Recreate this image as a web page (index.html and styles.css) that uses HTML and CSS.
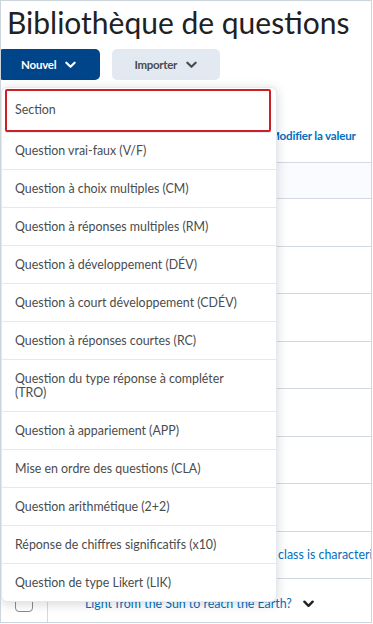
FILE: index.html
```html
<!DOCTYPE html>
<html lang="fr">
<head>
    <meta charset="UTF-8">
    <title>Bibliothèque de questions</title>
    <link rel="stylesheet" href="styles.css">
</head>
<body>

<div class="frame">
    <h1 class="page-title">Bibliothèque de questions</h1>

    <div class="toolbar">
        <button class="btn btn-primary">Nouvel
            <svg class="chevron" viewBox="0 0 12 8"><path d="M1.5 1.5 L6 6 L10.5 1.5"/></svg>
        </button>
        <button class="btn btn-secondary">Importer
            <svg class="chevron" viewBox="0 0 12 8"><path d="M1.5 1.5 L6 6 L10.5 1.5"/></svg>
        </button>
    </div>

    <div class="actions">
        <a href="#">Modifier la valeur</a>
    </div>

    <!-- liste des questions (derrière le menu) -->
    <div class="qtable">
        <div class="qrow qhead"><div class="qcell check"></div><div class="qcell"></div></div>
        <div class="qrow tall"><div class="qcell check"></div><div class="qcell"></div></div>
        <div class="qrow"><div class="qcell check"></div><div class="qcell"></div></div>
        <div class="qrow tall"><div class="qcell check"></div><div class="qcell"></div></div>
        <div class="qrow"><div class="qcell check"></div><div class="qcell"></div></div>
        <div class="qrow tall"><div class="qcell check"></div><div class="qcell"></div></div>
        <div class="qrow"><div class="qcell check"></div><div class="qcell"></div></div>
        <div class="qrow tall"><div class="qcell check"></div><div class="qcell"></div></div>
        <div class="qrow">
            <div class="qcell check"><span class="checkbox"></span></div>
            <div class="qcell text middle"><a href="#">Which main-sequence spectral class is characterized by</a></div>
        </div>
        <div class="qrow last">
            <div class="qcell check"><span class="checkbox"></span></div>
            <div class="qcell text">
                <a href="#">How long does it take for<br>Light from the Sun to reach the Earth?</a><svg class="chevron dark" viewBox="0 0 12 8"><path d="M1.5 1.5 L6 6 L10.5 1.5"/></svg>
            </div>
        </div>
    </div>

    <ul class="menu">
        <li class="menu-item focused">Section</li>
        <li class="menu-item">Question vrai-faux (V/F)</li>
        <li class="menu-item">Question à choix multiples (CM)</li>
        <li class="menu-item">Question à réponses multiples (RM)</li>
        <li class="menu-item">Question à développement (DÉV)</li>
        <li class="menu-item">Question à court développement (CDÉV)</li>
        <li class="menu-item">Question à réponses courtes (RC)</li>
        <li class="menu-item">Question du type réponse à compléter (TRO)</li>
        <li class="menu-item">Question à appariement (APP)</li>
        <li class="menu-item">Mise en ordre des questions (CLA)</li>
        <li class="menu-item">Question arithmétique (2+2)</li>
        <li class="menu-item">Réponse de chiffres significatifs (x10)</li>
        <li class="menu-item">Question de type Likert (LIK)</li>
    </ul>
</div>

</body>
</html>
```

FILE: styles.css
```css
* {
    margin: 0;
    padding: 0;
    box-sizing: border-box;
    list-style: none;
}

body {
    background-color: #ffffff;
    font-family: Lato, "Noto Sans", sans-serif;
    color: #494c4e;
}

.frame {
    position: relative;
    width: 372px;
    height: 623px;
    border: 1px solid #cdd5dc;
    overflow: hidden;
}

.page-title {
    margin: 3px 0 0 6px;
    font-size: 30px;
    line-height: 36px;
    font-weight: 400;
    color: #202122;
    white-space: nowrap;
}

.toolbar {
    display: flex;
    gap: 12px;
    margin: 9px 0 0 -3px;
}

.btn {
    display: flex;
    align-items: center;
    gap: 9px;
    height: 31px;
    padding: 0 24px 0 23px;
    border: none;
    border-radius: 5px;
    font-family: Lato, sans-serif;
    font-size: 11.5px;
    letter-spacing: -0.2px;
    font-weight: 700;
}

.btn-primary {
    background-color: #004489;
    color: #ffffff;
}

.btn-secondary {
    padding: 0 23px 0 22px;
    background-color: #e3e9f1;
    color: #494c4e;
    letter-spacing: -0.3px;
}

.chevron {
    width: 11px;
    height: 8px;
    fill: none;
    stroke: #494c4e;
    stroke-width: 2.4;
    stroke-linecap: round;
    stroke-linejoin: round;
}

.btn-primary .chevron {
    stroke: #ffffff;
}

.actions {
    height: 82px;
    padding: 49px 0 0 268px;
    font-size: 11.6px;
    letter-spacing: -0.2px;
    font-weight: 700;
    white-space: nowrap;
}

.actions a {
    color: #006fbf;
    text-decoration: none;
}

/* tableau */
.qtable {
    border-top: 1px solid #d3d9e3;
}

.qrow {
    display: grid;
    grid-template-columns: 47px 1fr;
    height: 47px;
    border-bottom: 1px solid #d3d9e3;
}

.qrow.tall {
    height: 48px;
}

.qrow.qhead {
    height: 36px;
    background-color: #f9fbff;
}

.qrow.last {
    height: 60px;
    border-bottom: none;
}

.qcell.check {
    border-right: 1px solid #d3d9e3;
    display: flex;
    justify-content: center;
    padding-top: 14px;
}

.qrow.last .qcell.check {
    padding-top: 15px;
}

.checkbox {
    width: 18px;
    height: 18px;
    border: 1px solid #868c8f;
    border-radius: 4px;
}

.qcell.text {
    padding: 1px 0 0 37px;
    font-size: 12.4px;
    line-height: 16px;
    white-space: nowrap;
    overflow: hidden;
}

.qcell.text.middle {
    display: flex;
    align-items: center;
    padding: 0 0 0 60px;
}

.qcell.text a {
    color: #006fbf;
    text-decoration: none;
}

.chevron.dark {
    margin-left: 11px;
    stroke: #202122;
    stroke-width: 2.6;
}

/* menu déroulant */
.menu {
    position: absolute;
    top: 86px;
    left: 0;
    width: 276px;
    padding-top: 1px;
    background-color: #ffffff;
    border: 1px solid #e3e9f1;
    border-radius: 6px;
    box-shadow: 0 2px 12px rgba(0, 0, 0, 0.16);
}

.menu-item {
    padding: 11.5px 20px 11.5px 13px;
    font-size: 12.4px;
    line-height: 14px;
    color: #494c4e;
    border-bottom: 1px solid #e3e9f1;
}

.menu-item:last-child {
    border-bottom: none;
}

.menu-item.focused {
    margin: 0 5px 0 3px;
    padding: 12px 10px 12px 8px;
    height: 43px;
    border: 2px solid #cd2026;
    border-radius: 2px;
    box-shadow: 0 1px 0 #e3e9f1;
}
```
